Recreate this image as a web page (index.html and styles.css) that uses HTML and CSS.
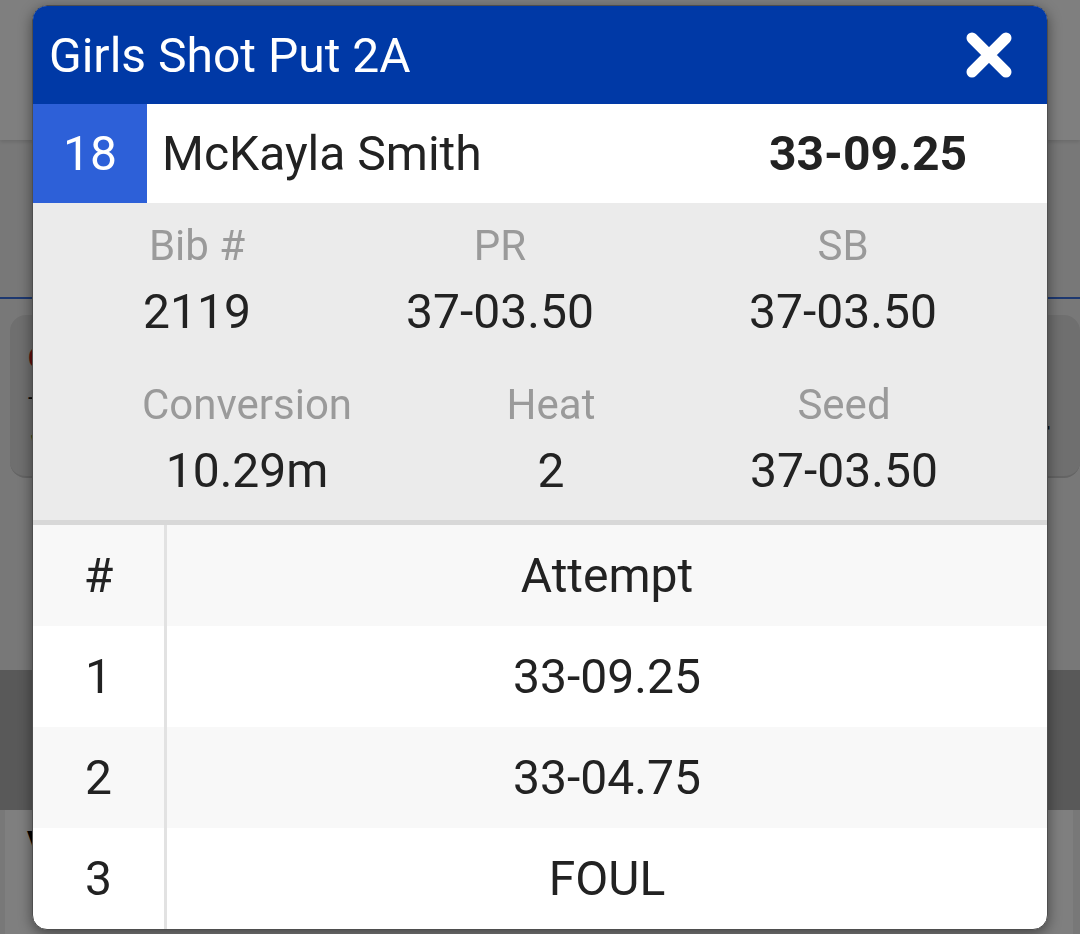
FILE: index.html
```html
<!DOCTYPE html>
<html>
<head>
  <meta charset="UTF-8">
  <title>Girls Shot Put 2A</title>
  <link rel="stylesheet" href="styles.css">
</head>
<body>

  <div class="page">
    <div class="topbar"></div>
    <div class="main">
      <div class="tabline"></div>
      <div class="card">
        <div class="card-left">
          <span class="card-title">C</span>
          <span class="card-dash">-</span>
          <span class="card-check">&#10004;</span>
        </div>
        <span class="card-right">r</span>
      </div>
      <div class="band"></div>
      <div class="results">
        <span class="results-v">V</span>
      </div>
    </div>
  </div>

  <div class="overlay"></div>

  <div class="modal">
    <div class="modal-head">
      <h2>Girls Shot Put 2A</h2>
      <svg class="close" width="46" height="46" viewBox="0 0 46 46">
        <path d="M6 6 L40 40 M40 6 L6 40" stroke="#fff" stroke-width="11" stroke-linecap="round" fill="none"/>
      </svg>
    </div>

    <div class="athlete">
      <div class="place">18</div>
      <div class="name">McKayla Smith</div>
      <div class="mark">33-09.25</div>
    </div>

    <div class="stats">
      <div class="stat-row first">
        <div class="stat"><div class="label">Bib #</div><div class="value">2119</div></div>
        <div class="stat"><div class="label">PR</div><div class="value">37-03.50</div></div>
        <div class="stat"><div class="label">SB</div><div class="value">37-03.50</div></div>
      </div>
      <div class="stat-row second">
        <div class="stat"><div class="label">Conversion</div><div class="value">10.29m</div></div>
        <div class="stat"><div class="label">Heat</div><div class="value">2</div></div>
        <div class="stat"><div class="label">Seed</div><div class="value">37-03.50</div></div>
      </div>
    </div>

    <div class="attempts">
      <div class="att-row shade"><div class="num">#</div><div>Attempt</div></div>
      <div class="att-row"><div class="num">1</div><div>33-09.25</div></div>
      <div class="att-row shade"><div class="num">2</div><div>33-04.75</div></div>
      <div class="att-row"><div class="num">3</div><div>FOUL</div></div>
    </div>
  </div>

</body>
</html>
```

FILE: styles.css
```css
* { box-sizing: border-box; }
body { margin: 0; font-family: Roboto, "Liberation Sans", sans-serif; background: #f1f1f1; overflow: hidden; }

/* page behind the dialog */
.page { height: 934px; }
.topbar { height: 140px; background: #fff; box-shadow: 0 2px 4px rgba(0,0,0,.12); }
.main { padding-top: 157px; }
.tabline { height: 2px; background: #3a70e0; }
.card { margin: 16px 0 0 10px; height: 163px; border-radius: 16px; background: #dedede; padding: 10px 18px; display: flex; justify-content: space-between; align-items: center; border-bottom: 2px solid #c8c8c8; }
.card-left { display: flex; flex-direction: column; gap: 12px; }
.card-title { color: #c21d1d; font-size: 30px; font-weight: 700; }
.card-dash { color: #111; font-size: 24px; line-height: 20px; }
.card-check { color: #2e9a3c; font-size: 28px; }
.card-right { font-size: 38px; color: #222; margin: 0 12px 10px 0; align-self: flex-end; }
.band { margin-top: 192px; height: 140px; background: #b3b3b3; }
.results { margin: 0 7px 0 5px; height: 124px; background: #fff; padding: 14px 22px; }
.results-v { font-size: 30px; font-weight: 700; color: #000; }

.overlay { position: fixed; inset: 0; background: rgba(0,0,0,.5); }

/* dialog */
.modal { position: absolute; top: 5px; left: 32px; width: 1016px; background: #fff; border: 1px solid #4e4e4e; border-radius: 15px; overflow: hidden; box-shadow: 0 4px 14px rgba(0,0,0,.45); }
.modal-head { height: 98px; background: #0039a6; color: #fff; display: flex; align-items: center; justify-content: space-between; padding: 0 35px 0 16px; }
.modal-head h2 { margin: 0; font-size: 48px; font-weight: 400; }

.athlete { height: 99px; display: flex; align-items: center; font-size: 48px; color: #222; }
.place { width: 114px; height: 100%; background: #2d60d8; color: #fff; display: flex; align-items: center; justify-content: center; }
.name { flex: 1; padding-left: 15px; }
.mark { width: 204px; margin-right: 77px; text-align: center; font-weight: 700; }

.stats { background: #ebebeb; padding: 18px 0 21px; }
.stat-row { display: grid; text-align: center; }
.stat-row.first { grid-template-columns: 328px 278px 1fr; }
.stat-row.second { grid-template-columns: 428px 180px 1fr; margin-top: 40px; }
.label { font-size: 42px; line-height: 50px; color: #9a9a9a; }
.value { font-size: 48px; line-height: 56px; margin-top: 13px; color: #222; }

.attempts { border-top: 5px solid #d8d8d8; }
.att-row { display: grid; grid-template-columns: 134px 1fr; height: 101px; align-items: center; text-align: center; font-size: 48px; color: #222; }
.att-row.shade { background: #f8f8f8; }
.num { height: 100%; border-right: 3px solid #e2e2e2; display: flex; align-items: center; justify-content: center; }
```
